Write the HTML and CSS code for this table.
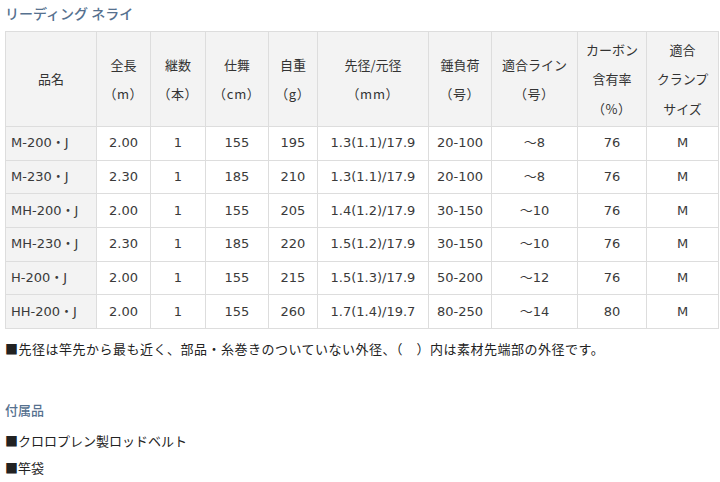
FILE: index.html
```html
<!DOCTYPE html>
<html lang="ja">
<head>
<meta charset="utf-8">
<link rel="stylesheet" href="styles.css">
</head>
<body>
<div class="page">
  <h2 class="title">リーディング ネライ</h2>
  <table class="spec">
    <colgroup>
      <col class="c1"><col class="c2"><col class="c3"><col class="c4"><col class="c5">
      <col class="c6"><col class="c7"><col class="c8"><col class="c9"><col class="c10">
    </colgroup>
    <thead>
      <tr>
        <th>品名</th>
        <th>全長<br><span class="p">（m）</span></th>
        <th>継数<br><span class="p">（本）</span></th>
        <th>仕舞<br><span class="p">（cm）</span></th>
        <th>自重<br><span class="p">（g）</span></th>
        <th>先径/元径<br><span class="p">（mm）</span></th>
        <th>錘負荷<br><span class="p">（号）</span></th>
        <th>適合ライン<br><span class="p">（号）</span></th>
        <th>カーボン<br>含有率<br><span class="p">（%）</span></th>
        <th>適合<br>クランプ<br>サイズ</th>
      </tr>
    </thead>
    <tbody>
      <tr><td class="name">M-200・J</td><td>2.00</td><td>1</td><td>155</td><td>195</td><td>1.3(1.1)/17.9</td><td>20-100</td><td>～8</td><td>76</td><td>M</td></tr>
      <tr><td class="name">M-230・J</td><td>2.30</td><td>1</td><td>185</td><td>210</td><td>1.3(1.1)/17.9</td><td>20-100</td><td>～8</td><td>76</td><td>M</td></tr>
      <tr><td class="name">MH-200・J</td><td>2.00</td><td>1</td><td>155</td><td>205</td><td>1.4(1.2)/17.9</td><td>30-150</td><td>～10</td><td>76</td><td>M</td></tr>
      <tr><td class="name">MH-230・J</td><td>2.30</td><td>1</td><td>185</td><td>220</td><td>1.5(1.2)/17.9</td><td>30-150</td><td>～10</td><td>76</td><td>M</td></tr>
      <tr><td class="name">H-200・J</td><td>2.00</td><td>1</td><td>155</td><td>215</td><td>1.5(1.3)/17.9</td><td>50-200</td><td>～12</td><td>76</td><td>M</td></tr>
      <tr><td class="name">HH-200・J</td><td>2.00</td><td>1</td><td>155</td><td>260</td><td>1.7(1.4)/19.7</td><td>80-250</td><td>～14</td><td>80</td><td>M</td></tr>
    </tbody>
  </table>
  <p class="note">■先径は竿先から最も近く、部品・糸巻きのついていない外径、（　）内は素材先端部の外径です。</p>
  <h3 class="sub">付属品</h3>
  <ul class="items">
    <li>■クロロプレン製ロッドベルト</li>
    <li>■竿袋</li>
  </ul>
</div>
</body>
</html>
```

FILE: styles.css
```css
html, body {
  margin: 0;
  padding: 0;
  background: #fff;
}
body {
  font-family: "DejaVu Sans", "Noto Sans CJK JP", sans-serif;
  font-size: 13px;
  color: #333;
}
.page {
  padding: 0 2px 0 5px;
}
.title {
  margin: 0 0 5px 0;
  font-family: "Noto Sans CJK JP", sans-serif;
  font-size: 14px;
  font-weight: 500;
  line-height: 26px;
  color: #56718f;
}
.spec {
  border-collapse: collapse;
  table-layout: fixed;
  width: 713px;
}
.c1 { width: 91px; }
.c2 { width: 54px; }
.c3 { width: 55px; }
.c4 { width: 63px; }
.c5 { width: 49px; }
.c6 { width: 111px; }
.c7 { width: 63px; }
.c8 { width: 86px; }
.c9 { width: 69px; }
.c10 { width: 72px; }
.spec th, .spec td {
  border: 1px solid #dddddd;
  padding: 0;
  text-align: center;
  vertical-align: middle;
}
.spec th {
  background: #f3f3f3;
  font-family: "Noto Sans CJK JP", sans-serif;
  font-weight: normal;
  font-size: 13px;
  line-height: 29.5px;
  height: 94px;
  color: #333;
}
.spec th .p {
  font-feature-settings: "palt";
  letter-spacing: 1px;
}
.spec td {
  height: 32.67px;
  line-height: 20px;
  color: #3a3a3a;
}
.spec td.name {
  background: #f3f3f3;
  text-align: left;
  padding-left: 5px;
}
.note {
  margin: 10px 0 0 0;
  line-height: 20px;
  font-family: "Noto Sans CJK JP", sans-serif;
  font-size: 13px;
  letter-spacing: 0.5px;
  color: #222;
}
.sub {
  margin: 41px 0 0 0;
  line-height: 20px;
  font-family: "Noto Sans CJK JP", sans-serif;
  font-size: 13px;
  font-weight: 500;
  color: #56718f;
}
.items {
  list-style: none;
  margin: 7px 0 0 0;
  padding: 0;
  font-family: "Noto Sans CJK JP", sans-serif;
  font-size: 13px;
  color: #222;
}
.items li {
  line-height: 27px;
}
```
